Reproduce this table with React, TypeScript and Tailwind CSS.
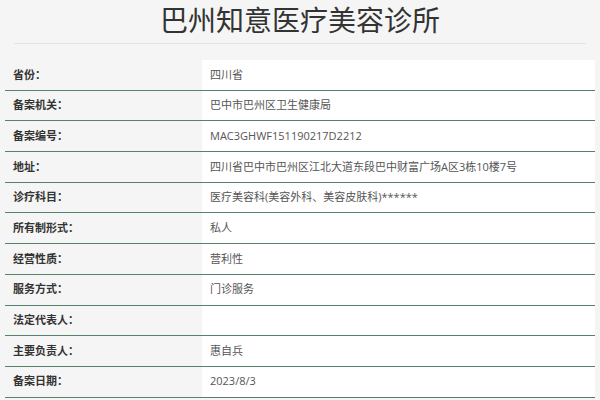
import React from "react";

const rows: [string, string][] = [
  ["省份：", "四川省"],
  ["备案机关：", "巴中市巴州区卫生健康局"],
  ["备案编号：", "MAC3GHWF151190217D2212"],
  ["地址：", "四川省巴中市巴州区江北大道东段巴中财富广场A区3栋10楼7号"],
  ["诊疗科目：", "医疗美容科(美容外科、美容皮肤科)******"],
  ["所有制形式：", "私人"],
  ["经营性质：", "营利性"],
  ["服务方式：", "门诊服务"],
  ["法定代表人：", ""],
  ["主要负责人：", "惠自兵"],
  ["备案日期：", "2023/8/3"],
];

export default function App() {
  return (
    <div
      className="w-[600px] h-[400px] overflow-hidden bg-[#f5f5f5]"
      style={{ fontFamily: '"Open Sans", "Noto Sans CJK SC", sans-serif' }}
    >
      <div className="mx-[14px] h-[44px] pt-[4px] border-b border-[#e4e4e4] flex items-start justify-center">
        <h1 className="text-[28px] leading-[30px] text-[#333] font-normal" style={{ fontFamily: '"Noto Sans CJK SC", sans-serif' }}>
          巴州知意医疗美容诊所
        </h1>
      </div>
      <div className="mx-[5px] mt-[16px]">
        {rows.map(([k, v]) => (
          <div key={k} className="grid grid-cols-[197px_1fr] h-[30.7px] border-b border-[#55826a]">
            <div className="flex items-center pl-[8px] text-[11px] font-bold text-[#333]">{k}</div>
            <div className="flex items-center bg-white pl-[8px] text-[11px] text-[#555]">{v}</div>
          </div>
        ))}
      </div>
    </div>
  );
}
